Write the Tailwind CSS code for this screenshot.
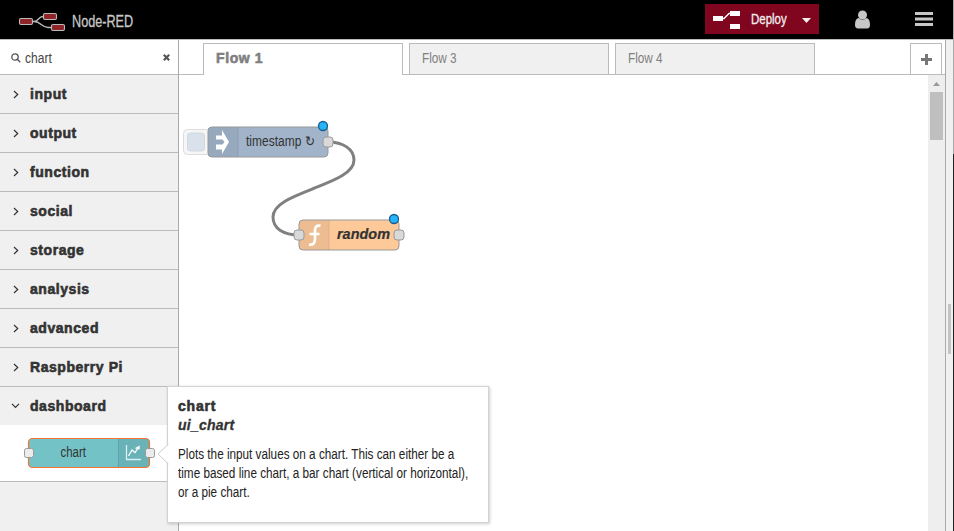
<!DOCTYPE html>
<html lang="en">
<head>
<meta charset="utf-8">
<title>Node-RED</title>
<script src="https://cdn.jsdelivr.net/npm/@tailwindcss/browser@4"></script>
</head>
<body class="w-[954px] h-[531px] overflow-hidden bg-white text-[#333] font-['Liberation_Sans',Arial,sans-serif] text-[14px]">
<div class="flex h-[531px]">
<div class="flex w-[953px] flex-col">
  <header class="flex h-[39px] shrink-0 items-center bg-black">
    <svg class="ml-[18px] mt-[5px] shrink-0" width="48" height="20" viewBox="18 12 48 20">
      <path d="M32 21.500h2c5 0 4-5 9-5h2M34 21.500c7 0 8 6 14 6h4" fill="none" stroke="#bbb" stroke-width="1.300"/>
      <g fill="#8f2529" stroke="#bbb" stroke-width="1.100"><rect x="19.500" y="18.500" width="13" height="6" rx="1.500"/><rect x="43.500" y="13.500" width="13" height="6" rx="1.500"/><rect x="51.500" y="24.500" width="13" height="6" rx="1.500"/></g>
    </svg>
    <div class="ml-[6px] mt-[5px] w-[90px]"><span class="inline-block origin-left scale-x-[.79] text-[16px] leading-[20px] text-[#c7c7c7] whitespace-nowrap [-webkit-text-stroke:.3px_#c7c7c7]">Node-RED</span></div>
    <div class="mb-[1px] ml-auto mr-[36px] flex h-[30px] w-[114px] shrink-0 items-center bg-[#80051f]">
      <svg class="ml-[8px] mt-[2px] shrink-0" width="28" height="20" viewBox="713 10 28 20"><path d="M713 16h10v5h-10zM730 11h10v5h-10zM730 24h10v5h-10z" fill="#fff"/><path d="M722 18.500h2l5-5h2" fill="none" stroke="#fff" stroke-width="1.300"/></svg>
      <div class="ml-[10px] mt-[1px] w-[40px]"><span class="inline-block origin-left scale-x-[.82] leading-[20px] text-[#eee] [-webkit-text-stroke:.3px_#eee]">Deploy</span></div>
      <svg class="ml-[11px] mt-[2px]" width="9" height="5" viewBox="0 0 9 5"><path d="M0 0h9L4.500 5z" fill="#eee"/></svg>
    </div>
    <svg class="mr-[45px] shrink-0" width="15" height="19" viewBox="0 0 15 19"><path d="M3.500 8C1 8.500 0 11 0 15c0 2 1 3.500 3 3.500h9c2 0 3-1.500 3-3.500 0-4-1-6.500-3.500-7a5.500 5.500 0 0 1-8 0z" fill="#c7c7c7"/><circle cx="7.500" cy="5" r="4.500" fill="#c7c7c7"/></svg>
    <svg class="mb-[1px] mr-[20px] shrink-0" width="18" height="16" viewBox="0 0 18 16"><path d="M0 1h18v3H0zM0 6.500h18v3H0zM0 12h18v3H0z" fill="#c7c7c7"/></svg>
  </header>
  <div class="flex h-[492px] border-t border-[#bbb]">
    <aside class="w-[179px] shrink-0 border-r border-[#aaa] bg-[#f0f0f0]">
      <div class="flex h-[35px] items-center border-b border-[#bbb] bg-white">
        <svg class="ml-[11px] mt-[1px]" width="10" height="10" viewBox="0 0 10 10" fill="none" stroke="#555" stroke-width="1.300"><circle cx="4" cy="4" r="3.200"/><path d="M6.300 6.300L9.300 9.300"/></svg>
        <div class="ml-[4px] mt-[2px] w-[130px]"><span class="inline-block origin-left scale-x-[.86] leading-[20px] text-[#444]">chart</span></div>
        <svg class="ml-[8px] mt-[1px]" width="7" height="7" viewBox="0 0 7 7"><path d="M.800 .800l5.400 5.400M6.200 .800L.800 6.200" stroke="#555" stroke-width="2.200"/></svg>
      </div>
      <div id="cats"></div>
      <div class="flex h-[38px] items-center"><svg class="ml-[11px]" width="9" height="6" viewBox="0 0 9 6"><path d="M1 .800L4.500 4.500 8 .800" fill="none" stroke="#333" stroke-width="1.200"/></svg><span class="ml-[10px] font-bold tracking-[.55px] [-webkit-text-stroke:.6px_#333]">dashboard</span></div>
      <div class="h-[57px] border-b border-[#bbb] bg-white">
        <svg width="178" height="56" viewBox="0 425 178 56">
          <rect x="28.500" y="438.500" width="121" height="29" rx="4" fill="#73c2c5"/>
          <path d="M118 439h28a4 4 0 0 1 4 4v20a4 4 0 0 1-4 4h-28z" fill="#69b2b8"/><path d="M118.500 439v28" stroke="#5da3a7"/>
          <rect x="28.500" y="438.500" width="121" height="29" rx="4" fill="none" stroke="#f17530" stroke-width="1.200"/>
          <path d="M126.500 445v14.500h14.500" fill="none" stroke="#d9f0f0" stroke-width="1.300"/><path d="M128.500 456l3.500-6 3 2.500 4-6M135.500 448.500l3.500-2v3" fill="none" stroke="#fff" stroke-width="1.300"/>
          <g fill="#ececec" stroke="#999"><rect x="24.500" y="448.500" width="9" height="9" rx="2"/><rect x="145.500" y="448.500" width="9" height="9" rx="2"/></g>
          <text x="60.500" y="457" font-size="14" fill="#333" textLength="25.500" lengthAdjust="spacingAndGlyphs">chart</text>
        </svg>
      </div>
    </aside>
    <main class="flex w-[767px] shrink-0 flex-col border-r border-[#aaa]">
      <nav class="flex h-[35px] items-end text-[#808080]">
        <div class="h-[35px] w-[24px] border-b border-[#bbb]"></div>
        <div class="flex h-[32px] w-[200px] border-x border-t border-[#bbb] bg-white pl-[12px]"><span class="mt-[4px] font-bold leading-[20px] tracking-[.6px] text-[#808080] [-webkit-text-stroke:.6px_#808080]">Flow 1</span></div>
        <div class="h-[35px] w-[6px] border-b border-[#bbb]"></div>
        <div class="h-[32px] w-[200px] border border-[#bbb] bg-[#f0f0f0] pl-[12px] pt-[4px]"><span class="inline-block origin-left scale-x-[.84] leading-[20px]">Flow 3</span></div>
        <div class="h-[35px] w-[6px] border-b border-[#bbb]"></div>
        <div class="h-[32px] w-[200px] border border-[#bbb] bg-[#f0f0f0] pl-[12px] pt-[4px]"><span class="inline-block origin-left scale-x-[.84] leading-[20px]">Flow 4</span></div>
        <div class="h-[35px] grow border-b border-[#bbb]"></div>
        <div class="flex h-[32px] w-[32px] items-center justify-center border border-[#bbb] bg-white"><svg width="11" height="11" viewBox="0 0 11 11"><path d="M4 0h3v4h4v3H7v4H4V7H0V4h4z" fill="#777"/></svg></div>
        <div class="h-[35px] w-[3px] border-b border-[#bbb]"></div>
      </nav>
      <div class="flex grow">
        <svg width="749" height="456" viewBox="179 75 749 456">
          <path d="M328 142C343 142 354 149 354 160C354 173 334 180.500 313.500 188.500C293 196.500 273 204 273 217C273 229 284 235 299 235" fill="none" stroke="#808080" stroke-width="3"/>
          <rect x="183.500" y="129.500" width="30" height="25" rx="4" fill="#f6f6f6" stroke="#ddd"/>
          <rect x="187.500" y="133" width="17" height="18" rx="3" fill="#d9e1ea" stroke="#d4d8dd"/>
          <rect x="208" y="127" width="120" height="30" rx="4" fill="#a1b4ca"/>
          <path d="M238 127v30h-26a4 4 0 0 1-4-4v-22a4 4 0 0 1 4-4z" fill="#97a9bd"/><path d="M238 127v30" stroke="#8b9db1"/>
          <rect x="208" y="127" width="120" height="30" rx="4" fill="none" stroke="#999"/>
          <path d="M216 135.500h6v-5.500l7 12-7 12v-4.500h-6v-5h6.500l2-2.500-2-2.500h-6.500z" fill="#fff"/>
          <text x="246" y="146" font-size="14" fill="#333" textLength="69" lengthAdjust="spacingAndGlyphs">timestamp ↻</text>
          <rect x="299" y="220" width="100" height="30" rx="4" fill="#fdc998"/>
          <path d="M329 220v30h-26a4 4 0 0 1-4-4v-22a4 4 0 0 1 4-4z" fill="#edbd91"/><path d="M329 220v30" stroke="#deb18a"/>
          <rect x="299" y="220" width="100" height="30" rx="4" fill="none" stroke="#999"/>
          <path d="M320.500 225.800c-4-1-5.500 1-5.500 5v8.500c0 4-2 6-6 5.200M309.500 234h10" fill="none" stroke="#fff" stroke-width="2.700"/>
          <text x="337" y="239" font-size="14" font-weight="bold" font-style="italic" fill="#333" stroke="#333" stroke-width=".2" textLength="53" lengthAdjust="spacingAndGlyphs">random</text>
          <g fill="#d9d9d9" stroke="#999"><rect x="323" y="137" width="10" height="10" rx="3"/><rect x="294" y="230" width="10" height="10" rx="3"/><rect x="394" y="230" width="10" height="10" rx="3"/></g>
          <g fill="#26b3fa" stroke="#175d8b" stroke-width="1.300"><circle cx="323" cy="126" r="4.500"/><circle cx="394" cy="219" r="4.500"/></g>
        </svg>
        <div class="flex w-[17px] shrink-0 flex-col items-center bg-[#eee]"><svg class="mt-[7px]" width="7" height="4" viewBox="0 0 7 4"><path d="M0 4h7L3.500 0z" fill="#999"/></svg><div class="mr-px mt-[6px] h-[48px] w-[13px] bg-[#bfbfbf]"></div></div>
      </div>
    </main>
    <div class="w-[7px] bg-[#f0f0f0] pl-[2px] pt-[264px]"><div class="h-[50px] w-[3px] bg-[#c4c4c4]"></div></div>
  </div>
</div>
<div class="w-px bg-[#222]"><div class="h-[154px] bg-[#aaa]"></div></div>
</div>
<div class="absolute left-[167px] top-[386px] h-[137px] w-[322px] border border-[#d2d2d2] bg-white pl-[10px] pt-[10px] shadow-[1px_1px_3px_rgba(0,0,0,.2)]">
  <svg class="absolute -left-[11px] top-[56px]" width="12" height="22" viewBox="0 0 12 22"><path d="M12 1L1 11l11 10z" fill="#fff"/><path d="M11.500 1L1 11l10.500 10" fill="none" stroke="#ccc"/></svg>
  <div class="font-bold leading-[19px] tracking-[.8px] [-webkit-text-stroke:.6px_#333]">chart</div>
  <div class="font-bold italic leading-[19px] tracking-[.25px] [-webkit-text-stroke:.3px_#333]">ui_chart</div>
  <div class="mt-[10px] w-[360px] origin-left scale-x-[.838] whitespace-nowrap leading-[19px] text-[#222]">Plots the input values on a chart. This can either be a<br>time based line chart, a bar chart (vertical or horizontal),<br>or a pie chart.</div>
</div>
<script>
const names = ['input','output','function','social','storage','analysis','advanced','Raspberry Pi'];
document.getElementById('cats').innerHTML = names.map(n => `<div class="flex h-[39px] items-center border-b border-[#bbb]"><svg class="ml-[13px]" width="6" height="9" viewBox="0 0 6 9"><path d="M1 1l3.700 3.500L1 8" fill="none" stroke="#333" stroke-width="1.200"/></svg><span class="ml-[11px] font-bold tracking-[.55px] [-webkit-text-stroke:.6px_#333]">${n}</span></div>`).join('');
</script>
</body>
</html>
